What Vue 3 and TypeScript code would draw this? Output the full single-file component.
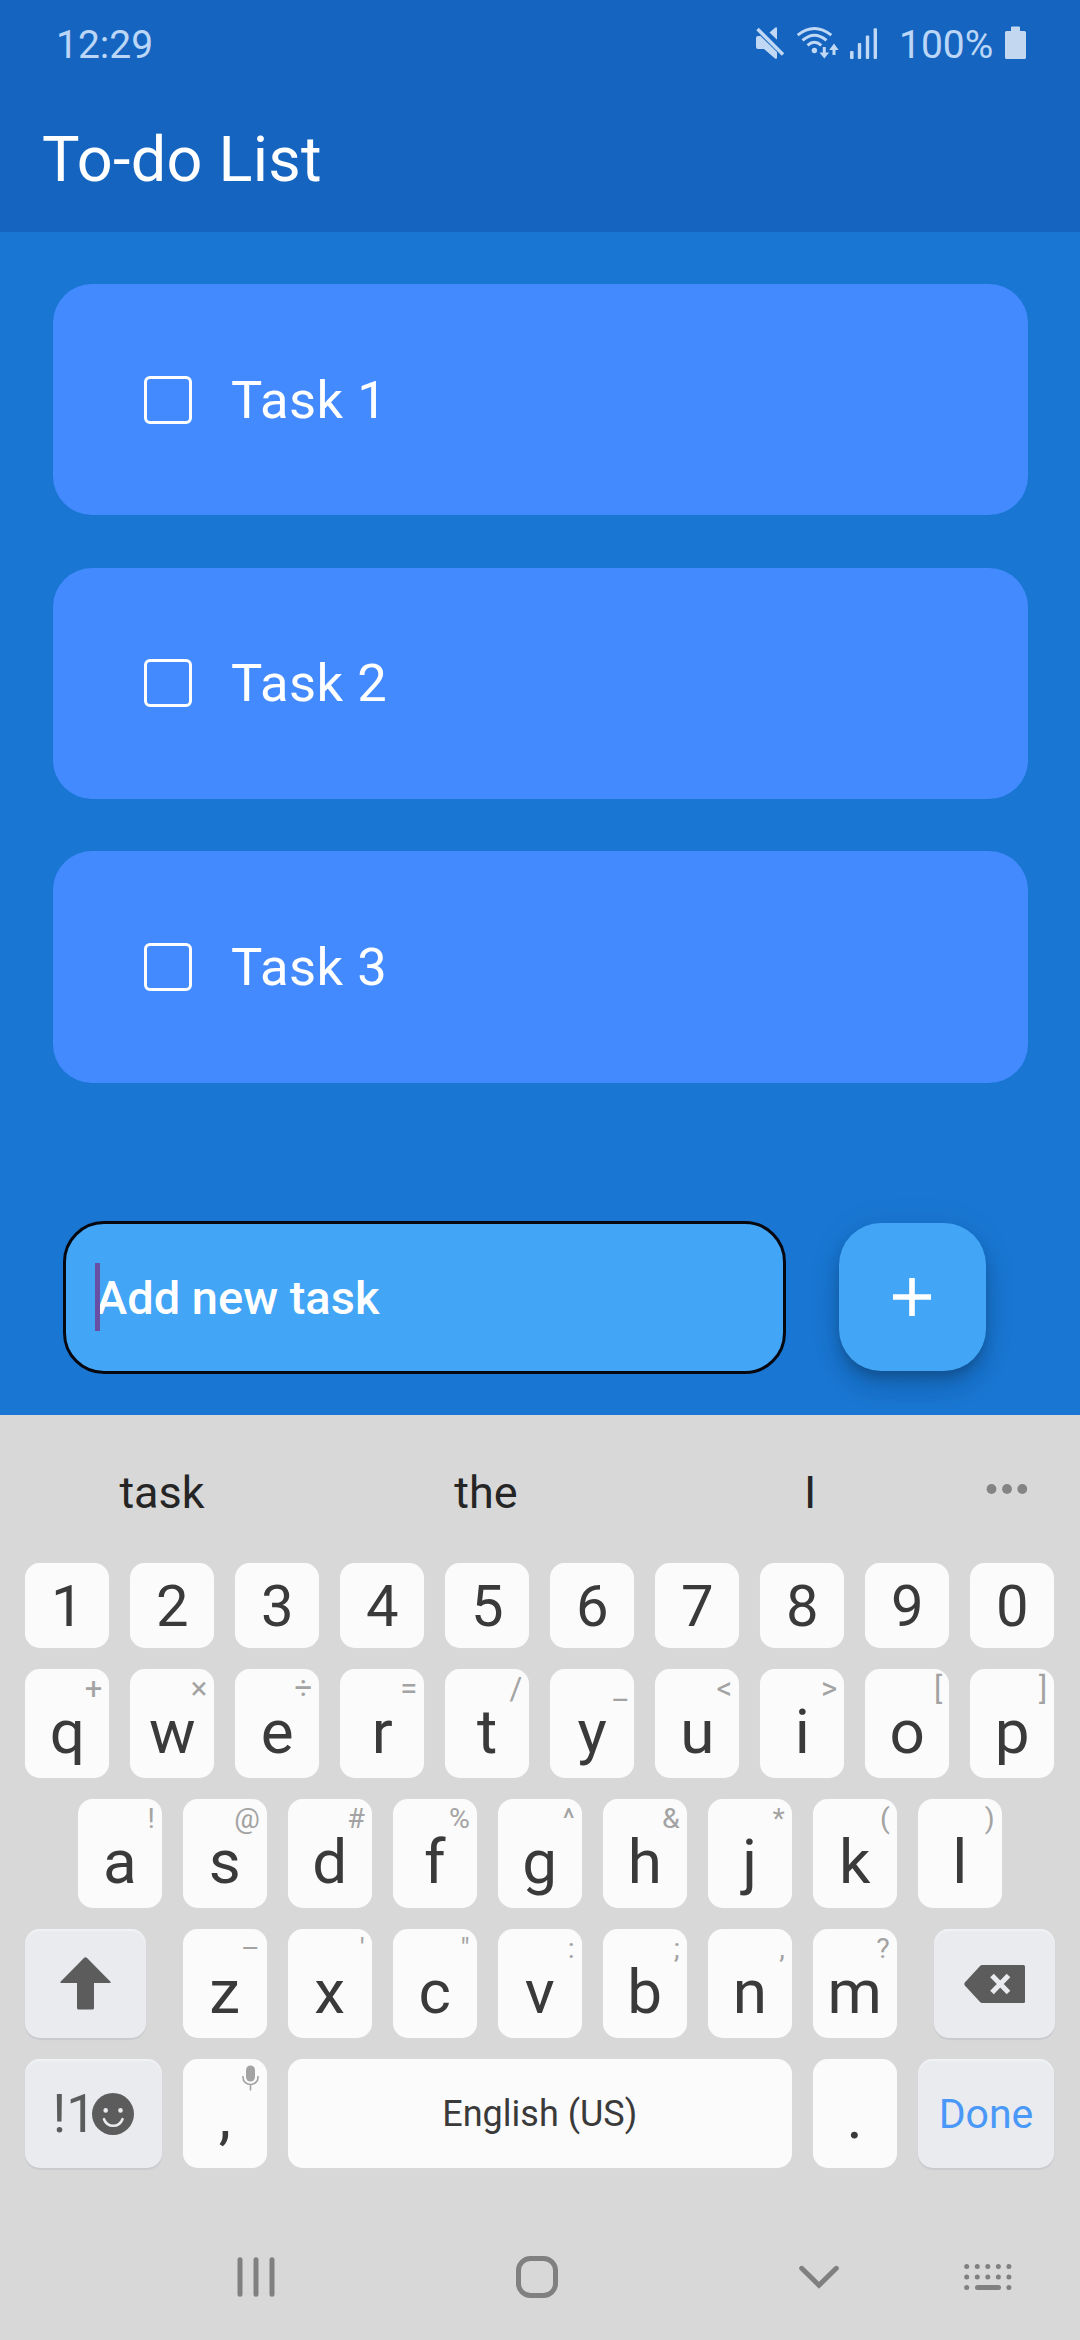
<script setup lang="ts">
interface Key {
  label: string
  hint?: string
}

const tasks: string[] = ['Task 1', 'Task 2', 'Task 3']
const suggestions: string[] = ['task', 'the', 'I']
const digits: string[] = [...'1234567890']

function keys(labels: string, hints: string): Key[] {
  const marks = [...hints]
  return [...labels].map((label, i) => ({ label, hint: marks[i] }))
}

const topRow = keys('qwertyuiop', '+×÷=/_<>[]')
const homeRow = keys('asdfghjkl', '!@#%^&*()')
const bottomRow = keys('zxcvbnm', '–\'":;,?')
const dotColumns: number[] = [0, 1, 2, 3, 4]
</script>

<template>
  <div class="screen">
    <header class="top">
      <div class="status">
        <span class="clock">12:29</span>
        <svg class="status-icons" width="126" height="36" viewBox="0 0 126 36">
          <path d="M18.500 7.500 24 2.700q2-1.400 2 .8V14.800z" fill="#c0d8f4" />
          <path d="M5.500 3.500 32.500 31" stroke="#1565c0" stroke-width="7" />
          <path d="M5 13q0-2 2-2h2.500L26 27v5.500q0 2-2 .9L13 24H7q-2 0-2-2z" fill="#c0d8f4" />
          <path d="M6.500 4 32 29.500" stroke="#c0d8f4" stroke-width="3.400" />
          <g fill="none" stroke="#c0d8f4" stroke-width="2.900">
            <path d="M46.700 10.200Q63.300-3.200 80.300 10.200" />
            <path d="M51.500 15.300Q63.300 5 75.500 15.300" />
            <path d="M56.500 20.300Q63.300 14.200 70.300 20.300" />
            <path d="M73.300 22v8M83 30v-8" stroke-width="3" />
          </g>
          <g fill="#c0d8f4">
            <circle cx="63.400" cy="25.500" r="2.700" />
            <path d="M68.500 27.500h9.700l-4.900 6zM78.200 25h9.400L83 18.500z" />
            <rect x="99" y="26" width="3.600" height="8" rx="1" />
            <rect x="106.800" y="18" width="3.400" height="16" rx="1" />
            <rect x="114.800" y="10.500" width="3.400" height="23.500" rx="1" />
            <rect x="122.600" y="3.300" width="3.400" height="30.700" rx="1" />
          </g>
        </svg>
        <span class="percent">100%</span>
        <svg width="21" height="33" viewBox="0 0 21 33">
          <path d="M6 5V1.500Q6 .5 7 .5h7q1 0 1 1V5h4.500Q21 5 21 6.500v25q0 1.500-1.500 1.500h-18Q0 33 0 31.500v-25Q0 5 1.500 5z" fill="#c3d8f0" />
        </svg>
      </div>
      <h1 class="title">To-do List</h1>
    </header>

    <main class="body">
      <ul class="tasks">
        <li v-for="task in tasks" :key="task" class="task">
          <span class="box"></span>
          <span>{{ task }}</span>
        </li>
      </ul>
      <div class="composer">
        <div class="field"><i class="caret"></i><span class="placeholder">Add new task</span></div>
        <button class="add">
          <svg width="38" height="38" viewBox="0 0 38 38"><path d="M0 19h38M19 0v38" stroke="#fff" stroke-width="5.600" /></svg>
        </button>
      </div>
    </main>

    <section class="keyboard">
      <div class="suggestions">
        <span v-for="word in suggestions" :key="word" class="word">{{ word }}</span>
        <svg class="more" width="42" height="12" viewBox="0 0 42 12" fill="#848484">
          <circle cx="5.500" cy="6" r="4.900" /><circle cx="21" cy="6" r="4.900" /><circle cx="36.300" cy="6" r="4.900" />
        </svg>
      </div>

      <div class="row digits">
        <div v-for="d in digits" :key="d" class="key digit">{{ d }}</div>
      </div>
      <div class="row">
        <div v-for="k in topRow" :key="k.label" class="key">{{ k.label }}<span class="hint">{{ k.hint }}</span></div>
      </div>
      <div class="row">
        <div v-for="k in homeRow" :key="k.label" class="key">{{ k.label }}<span class="hint small">{{ k.hint }}</span></div>
      </div>
      <div class="row spread">
        <div class="key fn shift">
          <svg width="51" height="53" viewBox="0 0 51 53">
            <path d="M24.200 .8q1.300-1.200 2.600 0L50.500 24.700q.7 1.300-.8 1.300H34v25q0 1.500-1.500 1.500h-14Q17 52.500 17 51V26H1.300Q-.2 26 .5 24.700z" fill="#5c5c5c" />
          </svg>
        </div>
        <div class="letters">
          <div v-for="k in bottomRow" :key="k.label" class="key">{{ k.label }}<span class="hint small">{{ k.hint }}</span></div>
        </div>
        <div class="key fn erase">
          <svg width="61" height="38" viewBox="0 0 61 38">
            <path d="M18 0h41.500Q61 0 61 1.500v35q0 1.500-1.500 1.500H18q-1 0-1.700-.7L.8 20.500q-1-1.500 0-3L16.300.7Q17 0 18 0z" fill="#5c5c5c" />
            <path d="M28 10.500 44.500 27.500M44.500 10.500 28 27.500" stroke="#e9ebef" stroke-width="5" />
          </svg>
        </div>
      </div>
      <div class="row">
        <div class="key fn wide symbols">
          <span class="sym">!1</span>
          <svg width="42" height="42" viewBox="0 0 42 42">
            <circle cx="21" cy="21" r="21" fill="#5c5c5c" />
            <circle cx="13.700" cy="17.400" r="2.300" fill="#e9ebef" />
            <circle cx="28.500" cy="17.400" r="2.300" fill="#e9ebef" />
            <path d="M12 26.200C15.500 35 27 35 30.500 26.200" fill="none" stroke="#e9ebef" stroke-width="2.600" stroke-linecap="round" />
          </svg>
        </div>
        <div class="key mark">,<svg class="mic" width="17" height="26" viewBox="0 0 17 26">
            <rect x="4" y=".5" width="9" height="16" rx="4.500" fill="#a3a3a3" />
            <path d="M1 11v1.500a7.500 7 0 0 0 15 0V11M8.500 19.500V25.500" fill="none" stroke="#a3a3a3" stroke-width="1.600" />
          </svg></div>
        <div class="key space">English (US)</div>
        <div class="key mark">.</div>
        <div class="key fn wide done">Done</div>
      </div>

      <nav class="nav">
        <svg width="38" height="42" viewBox="0 0 38 42" stroke="#808080" stroke-width="5" stroke-linecap="round">
          <path d="M3 3.700v34.600M19 3.700v34.600M35 3.700v34.600" />
        </svg>
        <svg class="home" width="42" height="42" viewBox="0 0 42 42" fill="none" stroke="#808080" stroke-width="5">
          <rect x="2.500" y="2.500" width="37" height="37" rx="12" />
        </svg>
        <svg class="down" width="40" height="24" viewBox="0 0 40 24" fill="none" stroke="#808080" stroke-width="5" stroke-linecap="round">
          <path d="M2.700 3.300 20 20.300 37.300 3.300" />
        </svg>
        <svg class="board" width="48" height="26" viewBox="0 0 48 26" fill="#808080">
          <g v-for="c in dotColumns" :key="c">
            <circle :cx="2.7 + c * 10.55" cy="2.500" r="2.500" />
            <circle :cx="2.7 + c * 10.55" cy="13" r="2.500" />
          </g>
          <circle cx="2.700" cy="23.500" r="2.500" />
          <rect x="11" y="21" width="26" height="5" rx="2.500" />
          <circle cx="44.900" cy="23.500" r="2.500" />
        </svg>
      </nav>
    </section>
  </div>
</template>

<style>
body {
  margin: 0;
}
</style>

<style scoped>
.screen {
  display: flex;
  flex-direction: column;
  width: 1080px;
  height: 2340px;
  overflow: hidden;
  background: #1976d2;
  color: #fff;
  font-family: Roboto, sans-serif;
}
svg {
  display: block;
  flex: none;
  overflow: visible;
}
.top {
  height: 232px;
  background: #1565c0;
}
.status {
  display: flex;
  align-items: center;
  height: 85px;
  padding: 0 54px 0 56px;
  font-size: 39px;
  line-height: 46px;
  color: #bbd6f7;
}
.clock {
  flex: 1;
  padding-top: 4px;
}
.status-icons {
  margin-right: 22px;
}
.percent {
  width: 106px;
  padding-top: 4px;
}
.title {
  margin: 0;
  padding-left: 42px;
  font-size: 63px;
  font-weight: 400;
  line-height: 149px;
  letter-spacing: 0.25px;
}
.body {
  display: flex;
  flex-direction: column;
  height: 1183px;
}
.tasks {
  display: flex;
  flex-direction: column;
  gap: 52.5px;
  margin: 0;
  padding: 52px 52.5px 0;
  list-style: none;
}
.task {
  display: flex;
  align-items: center;
  gap: 39px;
  box-sizing: border-box;
  height: 231.2px;
  padding-left: 91.5px;
  border-radius: 39px;
  background: #448aff;
  font-size: 52.5px;
  letter-spacing: 0.5px;
}
.box {
  box-sizing: border-box;
  width: 48px;
  height: 48px;
  border: 3px solid #fff;
  border-radius: 6px;
}
.composer {
  display: flex;
  align-items: center;
  gap: 52.5px;
  margin-top: 138px;
  padding-left: 63px;
}
.field {
  display: flex;
  align-items: center;
  box-sizing: border-box;
  width: 723px;
  height: 153px;
  padding-left: 29px;
  border: 3px solid #07070f;
  border-radius: 41px;
  background: #42a5f5;
  font-size: 47px;
  font-weight: 500;
}
.caret {
  z-index: 1;
  width: 5px;
  height: 68px;
  margin-right: -4px;
  background: #6750a4;
}
.add {
  display: flex;
  align-items: center;
  justify-content: center;
  width: 147.5px;
  height: 147.5px;
  padding: 0;
  border: 0;
  border-radius: 42px;
  background: #42a5f5;
  box-shadow: 0 8px 13px -3px rgba(0, 0, 0, 0.2), 0 16px 26px rgba(0, 0, 0, 0.14), 0 3px 40px rgba(0, 0, 0, 0.05);
}
.keyboard {
  position: relative;
  display: flex;
  flex-direction: column;
  gap: 21px;
  height: 925px;
  background: #d8d8d8;
  color: #3a3a3a;
}
.suggestions {
  display: flex;
  align-items: center;
  height: 127px;
  color: #252525;
  font-size: 45px;
}
.word {
  width: 324px;
  padding-top: 28px;
  text-align: center;
}
.more {
  margin: 21px 0 0 14px;
}
.row {
  display: flex;
  justify-content: center;
  gap: 21px;
  height: 109px;
  padding: 0 25.5px 0 25px;
}
.row.digits {
  height: 85px;
}
.row.spread {
  justify-content: space-between;
}
.letters {
  display: flex;
  gap: 21px;
}
.key {
  position: relative;
  display: flex;
  align-items: center;
  justify-content: center;
  box-sizing: border-box;
  width: 84px;
  height: 100%;
  padding-top: 16px;
  border-radius: 15px;
  background: #fbfbfb;
  box-shadow: 0 0 1px rgba(255, 255, 255, 0.4);
  font-size: 62px;
  line-height: 62px;
}
.digit {
  padding-top: 0;
  font-size: 58px;
}
.hint {
  position: absolute;
  top: 4px;
  right: 7px;
  color: #a3a3a3;
  font-size: 31px;
  line-height: 32px;
}
.hint.small {
  font-size: 28.5px;
}
.fn {
  padding-top: 0;
  background: #e9ebef;
  box-shadow: inset 0 2px 1px #f1f2f5, 0 1.5px 1px #c8cacd;
}
.shift,
.erase {
  width: 121px;
}
.wide {
  width: 137px;
}
.symbols {
  padding-right: 0;
  color: #5c5c5c;
  font-size: 53px;
}
.sym {
  margin-right: -3.5px;
}
.mark {
  padding-top: 6px;
}
.mic {
  position: absolute;
  top: 6px;
  right: 8px;
}
.space {
  width: 504px;
  padding-top: 0;
  font-size: 36px;
}
.done {
  color: #4a98f7;
  font-size: 41px;
}
.nav {
  display: flex;
  align-items: center;
  height: 84px;
  margin-top: 46px;
  padding-left: 237px;
}
.home {
  margin-left: 241px;
}
.down {
  margin-left: 241px;
}
.board {
  margin-left: 125px;
}
</style>
